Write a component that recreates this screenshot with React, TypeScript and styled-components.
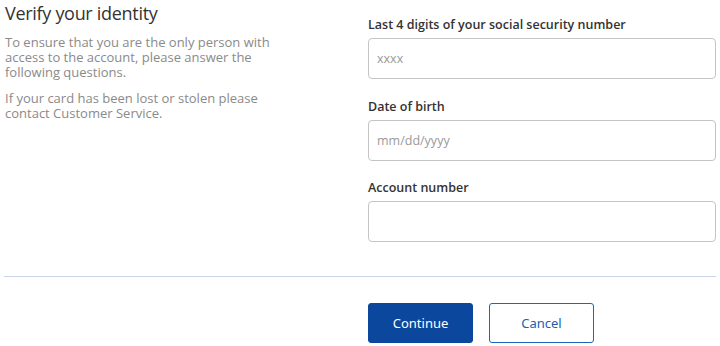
import React from "react";
import styled, { createGlobalStyle } from "styled-components";

const Global = createGlobalStyle`
  html, body { margin: 0; padding: 0; background: #fff; }
  body { font-family: "Open Sans", "Liberation Sans", sans-serif; }
  * { box-sizing: border-box; }
`;

const Page = styled.div`
  width: 720px;
  padding: 0 4px;
`;

const Top = styled.div`
  display: grid;
  grid-template-columns: 364px 348px;
  padding-bottom: 34px;
  border-bottom: 1px solid #c9d5e8;
`;

const Intro = styled.div`
  padding: 0 0 0 1px;
  width: 285px;
`;

const Title = styled.h1`
  margin: 0 0 9px;
  font-size: 18px;
  font-weight: 400;
  letter-spacing: -0.3px;
  color: #333;
  line-height: 26px;
`;

const Text = styled.p`
  margin: 0 0 11px;
  font-size: 13px;
  line-height: 15px;
  color: #8a8a8a;
`;

const Form = styled.div`
  display: flex;
  flex-direction: column;
  padding-top: 15px;
`;

const Field = styled.div`
  display: flex;
  flex-direction: column;
  margin-bottom: 17.5px;
  &:last-child { margin-bottom: 0; }
`;

const Label = styled.label`
  font-size: 12.5px;
  font-weight: 600;
  color: #333;
  line-height: 20px;
  margin-bottom: 3px;
`;

const Input = styled.input`
  height: 41px;
  width: 348px;
  border: 1px solid #c4c4c4;
  border-radius: 4px;
  padding: 0 8px;
  font-family: inherit;
  font-size: 12.5px;
  color: #333;
  outline: none;
  &::placeholder { color: #9a9a9a; }
`;

const Actions = styled.div`
  display: flex;
  gap: 16px;
  padding: 26px 0 0 364px;
`;

const Button = styled.button<{ $primary?: boolean }>`
  width: 105px;
  height: 40px;
  border-radius: 3px;
  font-family: "Noto Sans", "Open Sans", sans-serif;
  font-size: 13px;
  cursor: pointer;
  border: 1px solid ${(p) => (p.$primary ? "#0b479c" : "#1a66c0")};
  background: ${(p) => (p.$primary ? "#0b479c" : "#fff")};
  color: ${(p) => (p.$primary ? "#fff" : "#1a5fb4")};
`;

export default function App() {
  return (
    <Page>
      <Global />
      <Top>
        <Intro>
          <Title>Verify your identity</Title>
          <Text>
            To ensure that you are the only person with access to the account,
            please answer the following questions.
          </Text>
          <Text>If your card has been lost or stolen please contact Customer Service.</Text>
        </Intro>
        <Form>
          <Field>
            <Label>Last 4 digits of your social security number</Label>
            <Input placeholder="xxxx" />
          </Field>
          <Field>
            <Label>Date of birth</Label>
            <Input placeholder="mm/dd/yyyy" />
          </Field>
          <Field>
            <Label>Account number</Label>
            <Input />
          </Field>
        </Form>
      </Top>
      <Actions>
        <Button $primary>Continue</Button>
        <Button>Cancel</Button>
      </Actions>
    </Page>
  );
}
